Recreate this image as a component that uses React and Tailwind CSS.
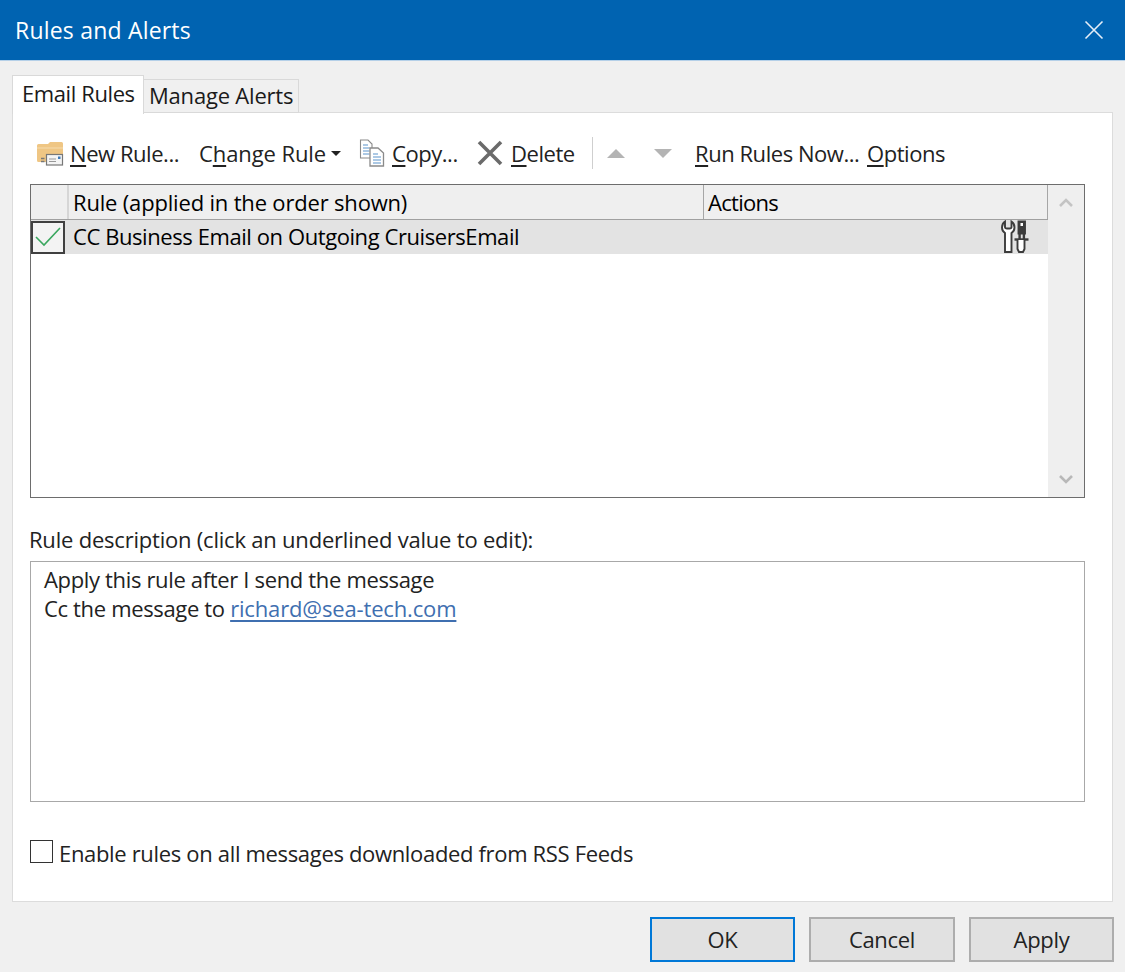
import React from "react";

const font = { fontFamily: '"Open Sans", "Noto Sans", sans-serif' };

function U({ children }) {
  return <span className="underline decoration-[1.5px] underline-offset-[3px]">{children}</span>;
}

function FolderIcon() {
  return (
    <svg width="30" height="26" viewBox="0 0 30 26" className="shrink-0">
      <path d="M1 5.5 Q1 4 2.5 4 H12 L14 2 H25.5 Q27 2 27 3.5 V22 H2.5 Q1 22 1 20.5 Z" fill="#efc684" />
      <path d="M1 8 H27" stroke="#f6dcae" strokeWidth="1" />
      <rect x="10.5" y="14.5" width="16" height="10.5" fill="#f4f4f4" stroke="#777" strokeWidth="1.2" />
      <path d="M13 19 H20 M13 21.5 H20" stroke="#999" strokeWidth="1" />
      <rect x="22" y="16.5" width="2.5" height="2.5" fill="#3d78b5" />
      <path d="M5 18.5 H8.5 M5 21.5 H8.5" stroke="#777" strokeWidth="1.6" />
    </svg>
  );
}

function CopyIcon() {
  return (
    <svg width="26" height="28" viewBox="0 0 26 28" className="shrink-0">
      <path d="M1.5 1 H9 L13 5 V19 H1.5 Z" fill="#fff" stroke="#8a8a8a" strokeWidth="1.1" />
      <path d="M4 6 H9 M4 9 H10.5 M4 12 H10.5 M4 15 H10.5" stroke="#5b93cc" strokeWidth="1.1" />
      <path d="M11 9 H19 L24.5 14 V27 H11 Z" fill="#fff" stroke="#8a8a8a" strokeWidth="1.3" />
      <path d="M14 15 H19 M14 18 H22 M14 21 H22 M14 24 H22" stroke="#5b93cc" strokeWidth="1.1" />
    </svg>
  );
}

function DeleteIcon() {
  return (
    <svg width="26" height="26" viewBox="0 0 26 26" className="shrink-0">
      <path d="M2 2 L24 24 M24 2 L2 24" stroke="#6a6a6a" strokeWidth="3.6" />
    </svg>
  );
}

function ToolsIcon() {
  return (
    <svg width="28" height="34" viewBox="0 0 28 34" fill="none" stroke="#3c3c3c" strokeWidth="1.9">
      <path d="M4 1.5 C1.6 3 1 5 1 7.5 C1 10.5 2.4 12 4 13 V32 H10.5 V13 C12.1 12 13.5 10.5 13.5 7.5 C13.5 5 13 3 10.5 1.5 V7 C10.5 8 9.5 8.5 8.5 8.5 H6 C5 8.5 4 8 4 7 Z" fill="#fff" />
      <path d="M17.5 1.5 H24 V13.5 H17.5 Z" fill="#3c3c3c" />
      <path d="M19.5 3 H22 V6 H19.5 Z" fill="#fff" stroke="none" />
      <path d="M18.6 13.5 V19 M22.9 13.5 V19" strokeWidth="2.4" />
      <path d="M13.5 19.5 H27.5" strokeWidth="2.4" />
      <path d="M16.5 20 V29 L18 32 H22 L23.5 29 V20" fill="#fff" />
    </svg>
  );
}

export default function App() {
  return (
    <div className="w-[1125px] h-[972px] bg-[#f0f0f0] flex flex-col overflow-hidden text-[#1a1a1a] text-[22px] leading-[30px]" style={font}>
      <div className="h-[60px] shrink-0 bg-[#0063b1] flex items-center justify-between pl-[15px] pr-[21px] text-white">
        <span className="text-[23px] tracking-[0.2px]">Rules and Alerts</span>
        <svg width="20" height="20" viewBox="0 0 20 20">
          <path d="M1.5 1.5 L18.5 18.5 M18.5 1.5 L1.5 18.5" stroke="#e6eff8" strokeWidth="1.6" />
        </svg>
      </div>
      <div className="h-px shrink-0 bg-[#b5d0e8]" />

      <div className="flex flex-col pl-[12px] pr-[12px] pt-[14px] flex-1 min-h-0">
        <div className="flex items-end h-[38px] relative z-10">
          <div className="w-[132px] h-[39px] bg-white border border-b-0 border-[#d9d9d9] flex items-center pl-[9px] pb-[4px] tracking-[-0.4px] -mb-px">
            Email Rules
          </div>
          <div className="w-[155px] h-[34px] bg-[#f0f0f0] border border-l-0 border-[#d9d9d9] flex items-center pl-[5px] pb-[2px] tracking-[-0.2px]">
            Manage Alerts
          </div>
        </div>

        <div className="h-[790px] bg-white border border-[#dcdcdc] -mt-px pl-[17px] pr-[27px] flex flex-col">
          <div className="h-[71px] shrink-0 flex items-center whitespace-nowrap text-[#222] pt-[9px] tracking-[-0.45px]">
            <div className="w-[163px] flex items-center ml-[6px]">
              <FolderIcon />
              <span className="ml-[4px]"><U>N</U>ew Rule...</span>
            </div>
            <div className="w-[160px] flex items-center tracking-[-0.1px]">
              <span>C<U>h</U>ange Rule</span>
              <span className="ml-[5px] w-0 h-0 border-x-[5px] border-x-transparent border-t-[5px] border-t-[#222]" />
            </div>
            <div className="w-[118px] flex items-center">
              <CopyIcon />
              <span className="ml-[7px]"><U>C</U>opy...</span>
            </div>
            <div className="w-[115px] flex items-center">
              <DeleteIcon />
              <span className="ml-[8px]"><U>D</U>elete</span>
            </div>
            <div className="w-px h-[32px] bg-[#cfcfcf]" />
            <div className="ml-[14px] w-[47px] flex">
              <span className="w-0 h-0 border-x-[9px] border-x-transparent border-b-[9px] border-b-[#b4b4b4]" />
            </div>
            <div className="w-[41px] flex">
              <span className="w-0 h-0 border-x-[9px] border-x-transparent border-t-[9px] border-t-[#b4b4b4]" />
            </div>
            <div className="w-[172px]"><U>R</U>un Rules Now...</div>
            <div><U>O</U>ptions</div>
          </div>

          <div className="h-[314px] shrink-0 border-[1.5px] border-[#6d6d6d] flex">
            <div className="flex-1 flex flex-col min-w-0">
              <div className="h-[35px] shrink-0 bg-[#efefef] border-b border-[#a0a0a0] flex items-center text-[#000] tracking-[-0.18px]">
                <div className="w-[36px] h-full" />
                <div className="w-[636px] h-full border-l-2 border-[#d6d6d6] flex items-center pl-[4px]">Rule (applied in the order shown)</div>
                <div className="flex-1 h-full border-l border-[#a6a6a6] border-r flex items-center pl-[4px] tracking-[-0.7px]">Actions</div>
              </div>
              <div className="h-[34px] shrink-0 bg-[#e3e3e3] flex items-center text-[#000] tracking-[-0.42px]">
                <div className="w-[34px] h-[33px] bg-[#f3f3f3] border-2 border-[#404040] flex items-center justify-center shrink-0">
                  <svg width="28" height="22" viewBox="0 0 28 22">
                    <path d="M2 11 L10 19 L26 2" fill="none" stroke="#3aa75f" strokeWidth="1.6" />
                  </svg>
                </div>
                <span className="ml-[8px] flex-1 pb-[2px]">CC Business Email on Outgoing CruisersEmail</span>
                <span className="mr-[19px] flex"><ToolsIcon /></span>
              </div>
            </div>
            <div className="w-[36px] shrink-0 bg-[#efefef] flex flex-col justify-between items-center py-[12px]">
              <svg width="16" height="11" viewBox="0 0 16 11"><path d="M2 9 L8 3 L14 9" fill="none" stroke="#c4c4c4" strokeWidth="2.6" /></svg>
              <svg width="16" height="11" viewBox="0 0 16 11"><path d="M2 2 L8 8 L14 2" fill="none" stroke="#b8b8b8" strokeWidth="2.6" /></svg>
            </div>
          </div>

          <div className="mt-[26px] -ml-px h-[30px] tracking-[-0.21px] text-[#222]">Rule description (click an underlined value to edit):</div>
          <div className="mt-[7px] h-[241px] shrink-0 border border-[#a8a8a8] pl-[13px] pt-[3px] leading-[29px] tracking-[-0.34px] text-[#222]">
            <div>Apply this rule after I send the message</div>
            <div>Cc the message to <span className="text-[#3f6fb0] underline underline-offset-[3px] tracking-[-0.15px]">richard@sea-tech.com</span></div>
          </div>

          <div className="mt-[36px] flex items-center tracking-[-0.33px] text-[#222]">
            <span className="w-[23px] h-[23px] -mt-[3px] bg-white border border-[#333] shrink-0" />
            <span className="ml-[6px]">Enable rules on all messages downloaded from RSS Feeds</span>
          </div>
        </div>

        <div className="flex justify-end gap-[14px] pt-[15px] -mr-px tracking-[-0.3px] text-[#222]">
          <button className="w-[145px] h-[45px] bg-[#e1e1e1] border-[2.5px] border-[#0078d7] pb-[2px]">OK</button>
          <button className="w-[146px] h-[45px] bg-[#e1e1e1] border-2 border-[#adadad] pb-[2px]">Cancel</button>
          <button className="w-[145px] h-[45px] bg-[#e1e1e1] border-2 border-[#adadad] pb-[2px]">Apply</button>
        </div>
      </div>
    </div>
  );
}
